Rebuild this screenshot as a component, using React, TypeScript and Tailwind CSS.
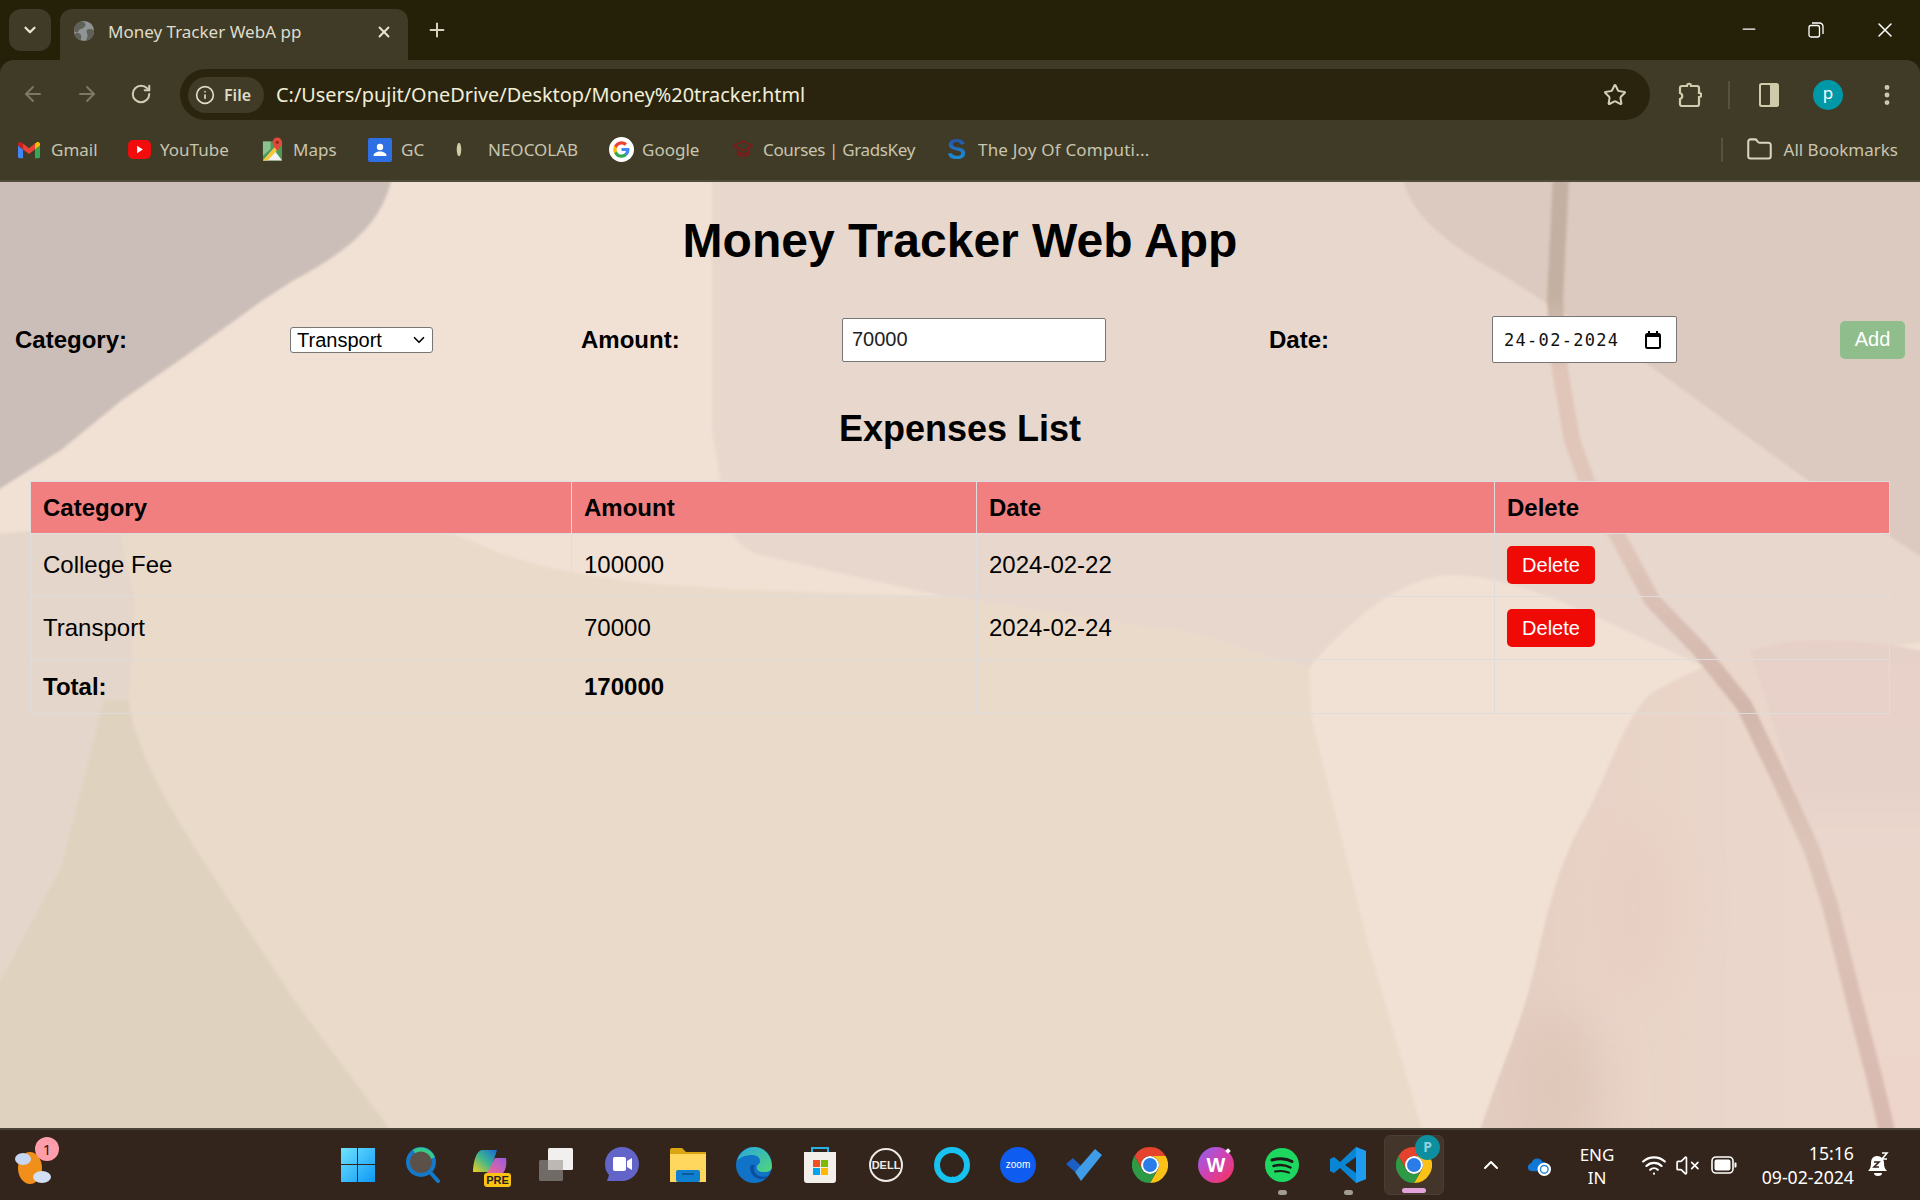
import { ArrowLeft, ArrowRight, RotateCw, Info, Star, X, Plus, ChevronDown, ChevronUp, Minus, EllipsisVertical, Folder, Wifi, VolumeX } from 'lucide-react';

const expenses = [
  { category: 'College Fee', amount: '100000', date: '2024-02-22' },
  { category: 'Transport', amount: '70000', date: '2024-02-24' },
];

function GmailIcon() {
  return (
    <svg viewBox="0 0 24 18" className="w-[22px] h-[18px]">
      <path d="M0 4v12a2 2 0 0 0 2 2h3.500V8.500z" fill="#4285f4" />
      <path d="M24 4v12a2 2 0 0 1-2 2h-3.500V8.500z" fill="#34a853" />
      <path d="M18.500 2v6.500L24 4V2.500C24 .6 21.800-.5 20.300.7z" fill="#fbbc04" />
      <path d="M5.500 8.500V2L12 7l6.500-5v6.500L12 13.400z" fill="#ea4335" />
      <path d="M0 2.500V4l5.500 4.500V2L3.700.7C2.200-.5 0 .6 0 2.500" fill="#c5221f" />
    </svg>
  );
}

function YoutubeIcon() {
  return (
    <svg viewBox="0 0 24 20" className="w-[23px] h-[19px]">
      <rect width="24" height="20" rx="5" fill="#f40b0b" />
      <path d="M9.500 6v8l6-4z" fill="#fff" />
    </svg>
  );
}

function MapsIcon() {
  return (
    <svg viewBox="0 0 22 26" className="w-[21px] h-[26px]">
      <path d="M1 4h12l8 0v20H1z" fill="#4b9a5a" />
      <path d="M1 24 12 12l9 12z" fill="#f2f2f2" />
      <path d="M1 24 14 9l3 3L6 24z" fill="#f6c73b" />
      <path d="M1 4h8v8L1 19z" fill="#8cc28f" />
      <path d="M16 0a5 5 0 0 1 5 5c0 3.500-5 9-5 9s-5-5.500-5-9a5 5 0 0 1 5-5" fill="#e3493a" />
      <circle cx="16" cy="5" r="1.800" fill="#8f2d24" />
    </svg>
  );
}

function ContactsIcon() {
  return (
    <svg viewBox="0 0 24 24" className="w-[24px] h-[24px]">
      <rect width="24" height="24" rx="2" fill="#2f6fe4" />
      <circle cx="12" cy="9" r="3.200" fill="#fff" />
      <path d="M5.500 18c0-3 3-4.500 6.500-4.500s6.500 1.500 6.500 4.500z" fill="#fff" />
    </svg>
  );
}

function NeoIcon() {
  return (
    <svg viewBox="0 0 8 20" className="w-[6px] h-[19px]">
      <ellipse cx="4" cy="10" rx="3" ry="9" fill="#cfcca6" />
    </svg>
  );
}

function GoogleIcon() {
  return (
    <svg viewBox="0 0 30 30" className="w-[25px] h-[25px]">
      <circle cx="15" cy="15" r="15" fill="#fff" />
      <path d="M24.500 15.200c0-.7-.1-1.300-.2-1.900H15v3.600h5.300a4.500 4.500 0 0 1-2 3v2.400h3.200c1.900-1.700 3-4.300 3-7.100" fill="#4285f4" />
      <path d="M15 25c2.700 0 4.900-.9 6.500-2.400l-3.200-2.500c-.9.600-2 1-3.300 1-2.600 0-4.800-1.700-5.500-4.100H6.200v2.500A10 10 0 0 0 15 25" fill="#34a853" />
      <path d="M9.500 17a6 6 0 0 1 0-3.900v-2.600H6.200a10 10 0 0 0 0 9z" fill="#fbbc05" />
      <path d="M15 9c1.500 0 2.800.5 3.800 1.500l2.800-2.800A10 10 0 0 0 6.200 10.500l3.300 2.600C10.200 10.700 12.400 9 15 9" fill="#ea4335" />
    </svg>
  );
}

function CapIcon() {
  return (
    <svg viewBox="0 0 24 20" fill="none" stroke="#7a1c1c" strokeWidth="1.800" className="w-[22px] h-[19px]">
      <path d="M12 1 22 6l-10 5L2 6z" />
      <path d="M6 9v6c3 3 9 3 12 0V9" />
      <path d="M6 13c3 2 9 2 12 0" />
    </svg>
  );
}

function JoyIcon() {
  return <span className="w-[19px] text-[29px] leading-[29px] font-black font-['Liberation_Sans',sans-serif] bg-gradient-to-b from-[#26479f] to-[#0b9fe3] bg-clip-text text-transparent">S</span>;
}

function ChromeIcon() {
  return (
    <svg viewBox="0 0 36 36" className="w-[36px] h-[36px]">
      <path d="M2.410 9A18 18 0 0 1 33.590 9L18 9A9 9 0 0 0 10.200 22.500Z" fill="#e5432e" />
      <path d="M33.590 9A18 18 0 0 1 18 36L25.800 22.500A9 9 0 0 0 18 9Z" fill="#fbc116" />
      <path d="M18 36A18 18 0 0 1 2.410 9L10.200 22.500A9 9 0 0 0 25.800 22.500Z" fill="#2f9a46" />
      <circle cx="18" cy="18" r="9" fill="#fff" />
      <circle cx="18" cy="18" r="7" fill="#2a7de9" />
    </svg>
  );
}

const bookmarks = [
  { width: 'w-[110px]', label: 'Gmail', icon: <GmailIcon />, gap: 'gap-[11px]', text: '' },
  { width: 'w-[134px]', label: 'YouTube', icon: <YoutubeIcon />, gap: 'gap-[9px]', text: '' },
  { width: 'w-[106px]', label: 'Maps', icon: <MapsIcon />, gap: 'gap-[10px]', text: '' },
  { width: 'w-[88px]', label: 'GC', icon: <ContactsIcon />, gap: 'gap-[9px]', text: '' },
  { width: 'w-[153px]', label: 'NEOCOLAB', icon: <NeoIcon />, gap: 'gap-[26px]', text: '' },
  { width: 'w-[123px]', label: 'Google', icon: <GoogleIcon />, gap: 'gap-[8px]', text: '' },
  { width: 'w-[215px]', label: 'Courses | GradsKey', icon: <CapIcon />, gap: 'gap-[9px]', text: 'tracking-[-0.35px]' },
  { width: 'w-[220px]', label: 'The Joy Of Computi...', icon: <JoyIcon />, gap: 'gap-[12px]', text: 'tracking-[0.2px]' },
];

function BrowserChrome() {
  return (
    <div className="bg-[#252109] font-['Noto_Sans',sans-serif]">
      {/* tab strip */}
      <div className="h-[60px] flex items-start pl-[9px] relative">
        <div className="mt-[9px] w-[42px] h-[42px] rounded-xl bg-[#403b26] flex items-center justify-center text-[#e8e6d4]">
          <ChevronDown size={18} strokeWidth={3} />
        </div>
        <div className="relative ml-[9px] mt-[9px] w-[348px] h-[51px] rounded-t-xl bg-[#403b26] flex items-center pl-[13px] pr-[15px]">
          <svg viewBox="0 0 24 24" className="w-[22px] h-[22px] shrink-0 mb-[8px]">
            <defs>
              <clipPath id="globe"><circle cx="12" cy="12" r="11" /></clipPath>
            </defs>
            <circle cx="12" cy="12" r="11" fill="#8f9494" />
            <g clipPath="url(#globe)" fill="#5f6058">
              <path d="M9 1c3 1 6 3 4 6s-6 2-7 5-5 1-6-1V1z" />
              <path d="M15 11c3-2 6-1 9 1v6l-6 6h-3c-1-3 1-5 1-7s-2-4-1-6zM4 14c3 0 5 2 5 4s-1 3 0 6H3l-3-7z" />
            </g>
          </svg>
          <span className="ml-[13px] text-[17px] leading-[24px] text-[#dedcca] mb-[6px] whitespace-nowrap">Money Tracker WebA pp</span>
          <X size={18} strokeWidth={2.5} className="ml-auto mb-[6px] text-[#e8e6d4]" />
        </div>
        <Plus size={22} strokeWidth={2.2} className="ml-[18px] mt-[19px] text-[#d5d3bd]" />
        <div className="ml-auto flex items-center h-[60px] pb-[1px] text-white">
          <Minus size={20} strokeWidth={1.5} className="mr-[49px] mb-[2px]" />
          <svg viewBox="0 0 16 16" fill="none" stroke="#fff" strokeWidth="1.300" className="w-[16px] h-[16px] mr-[49px]">
            <rect x="1" y="3.500" width="10.500" height="11.500" rx="2" />
            <path d="M4 1h7.500a3.500 3.500 0 0 1 3.500 3.500V12" />
          </svg>
          <X size={24} strokeWidth={1.5} className="mr-[23px]" />
        </div>
      </div>

      {/* toolbar + bookmarks */}
      <div className="rounded-t-[14px] bg-[#403b26]">
        <div className="h-[60px] flex items-end">
          <ArrowLeft size={24} strokeWidth={2} className="ml-[21px] mb-[14px] text-[#7b7865]" />
          <ArrowRight size={24} strokeWidth={2} className="ml-[30px] mb-[14px] text-[#7b7865]" />
          <RotateCw size={22} strokeWidth={2.2} className="ml-[31px] mb-[15px] text-[#cfcdb4]" />
          <div className="ml-[28px] w-[1470px] h-[51px] rounded-full bg-[#2a240e] flex items-center pl-[8px] mt-auto">
            <div className="h-[36px] w-[76px] rounded-full bg-[#403b26] flex items-center pl-[7px] gap-[9px] text-[#dedcc6]">
              <Info size={20} strokeWidth={2} />
              <span className="text-[16px] font-semibold leading-none">File</span>
            </div>
            <span className="ml-[12px] text-[19.9px] text-[#f0eed8] whitespace-nowrap">C:/Users/pujit/OneDrive/Desktop/Money%20tracker.html</span>
            <Star size={24} strokeWidth={2} className="ml-auto mr-[23px] text-[#d2d0ba]" />
          </div>
          <div className="flex items-center h-[51px]">
            <svg viewBox="0 0 24 28" fill="none" stroke="#cfcdae" strokeWidth="2.200" className="ml-[28px] w-[24px] h-[28px]">
              <path d="M4 5h5c0-3 4-3 4 0h6a2 2 0 0 1 2 2v5c3 0 3 4 0 4v7a2 2 0 0 1-2 2H4a2 2 0 0 1-2-2v-5c3-1 3-5 0-6V7a2 2 0 0 1 2-2z" />
            </svg>
            <div className="ml-[26px] w-[2px] h-[28px] bg-[#57523a]" />
            <svg viewBox="0 0 22 26" className="ml-[28px] w-[22px] h-[26px]">
              <rect x="1" y="1" width="20" height="24" rx="2.500" fill="#cfcbaa" />
              <rect x="3" y="3" width="9" height="20" rx="1" fill="#403b26" />
            </svg>
            <div className="ml-[33px] w-[30px] h-[30px] rounded-full bg-[#0097a7] text-white text-[17px] leading-[26px] text-center">p</div>
            <EllipsisVertical size={26} strokeWidth={2.5} className="ml-[31px] text-[#cfcdb4]" />
          </div>
        </div>
        <div className="h-[60px] flex items-center pl-[18px] pb-[1px] text-[#c8c5b0] text-[17px]">
          {bookmarks.map((b) => (
            <div key={b.label} className={`${b.width} ${b.gap} flex items-center shrink-0`}>
              {b.icon}
              <span className={`whitespace-nowrap ${b.text}`}>{b.label}</span>
            </div>
          ))}
          <div className="ml-auto w-[2px] h-[24px] bg-[#57523a]" />
          <Folder size={27} strokeWidth={1.8} className="ml-[23px] text-[#d8d6c2]" />
          <span className="ml-[11px] mr-[22px] whitespace-nowrap">All Bookmarks</span>
        </div>
      </div>
      <div className="h-[2px] bg-[#4f4c3c]" />
    </div>
  );
}

function Backdrop() {
  const petal = 'M1477 1140 C1500 1070 1515 1040 1529 990 C1545 930 1550 880 1585 817 C1610 770 1625 715 1652 693 C1690 670 1760 640 1817 640 C1860 640 1900 645 1930 653 V1140Z';
  return (
    <svg viewBox="0 182 1920 946" preserveAspectRatio="none" className="absolute inset-0 w-full h-full">
      <defs>
        <filter id="soft"><feGaussianBlur stdDeviation="1.500" /></filter>
        <filter id="softer" x="-100%" y="-100%" width="300%" height="300%"><feGaussianBlur stdDeviation="24" /></filter>
        <linearGradient id="petalLeft" x1="1477" y1="0" x2="1800" y2="0" gradientUnits="userSpaceOnUse">
          <stop offset="0" stopColor="#e2cbbf" />
          <stop offset="0.35" stopColor="#e8d2c6" />
          <stop offset="1" stopColor="#ebd7cc" />
        </linearGradient>
        <linearGradient id="petalRight" x1="0" y1="640" x2="0" y2="1128" gradientUnits="userSpaceOnUse">
          <stop offset="0" stopColor="#e6d0c8" />
          <stop offset="0.3" stopColor="#e7d2c9" />
          <stop offset="0.4" stopColor="#ead6cc" />
          <stop offset="1" stopColor="#eed5cb" />
        </linearGradient>
        <linearGradient id="streak" x1="0" y1="182" x2="0" y2="1128" gradientUnits="userSpaceOnUse">
          <stop offset="0" stopColor="#c4b0a3" />
          <stop offset="0.12" stopColor="#c4b0a3" />
          <stop offset="0.2" stopColor="#e0c5b8" />
          <stop offset="0.38" stopColor="#e0c6ba" />
          <stop offset="0.55" stopColor="#d2b6ac" />
          <stop offset="0.7" stopColor="#dcc4b8" />
          <stop offset="1" stopColor="#d8b9af" />
        </linearGradient>
        <clipPath id="petalClip"><path d={petal} /></clipPath>
      </defs>
      <rect x="0" y="182" width="1920" height="946" fill="#f1e1d4" />
      <g filter="url(#soft)">
        {/* pink centre */}
        <path d="M712 170 V430 L722 490 C726 530 735 547 760 555 L960 600 L1193 633 L1309 668 C1350 620 1400 578 1450 575 C1520 575 1600 620 1700 665 L1950 640 V170Z" fill="#e8d7cd" />
        {/* beige lower area */}
        <path d="M-10 535 C100 525 250 515 330 520 C400 522 440 528 470 540 C520 565 600 585 760 590 L960 598 L1193 633 L1309 668 L1312 720 L1370 950 L1425 1140 H-10Z" fill="#eadaca" />
        {/* left wash + wedge */}
        <path d="M-10 535 C40 528 90 530 120 535 L135 600 L129 700 C135 760 190 840 227 897 L294 1000 L398 1140 H-10Z" fill="#e4d6cb" />
        <path d="M104 700 L129 700 C135 760 190 840 227 897 L294 1000 L398 1140 H-10 V1000 L61 867Z" fill="#dfd3bf" />
        {/* cream block over the table */}
        <path d="M1309 668 C1350 620 1400 578 1450 575 C1520 575 1600 620 1700 665 L1600 760 L1560 860 L1529 990 L1477 1140 H1428 L1370 950 L1312 720Z" fill="#f1e1d4" />
        {/* top left mauve */}
        <path d="M-10 170 H394 C385 210 370 240 294 280 L263 300 L184 357 L122 400 L61 450 L-10 495Z" fill="#cbbdb8" />
        {/* top right */}
        <path d="M1402 170 C1405 210 1440 240 1506 277 L1542 300 L1652 367 L1817 487 L1930 563 V170Z" fill="#dcc9bf" />
        {/* right petal */}
        <path d={petal} fill="url(#petalLeft)" />
        <path d="M1744 630 L1830 905 L1885 1140 H1930 V630Z" fill="url(#petalRight)" clipPath="url(#petalClip)" />
      </g>
      <g clipPath="url(#petalClip)">
        <ellipse cx="1555" cy="1090" rx="45" ry="80" fill="#dfc8ba" filter="url(#softer)" />
        <ellipse cx="1634" cy="907" rx="40" ry="90" fill="#e8cfc3" filter="url(#softer)" />
      </g>
      {/* streak */}
      <path d="M1561 175 L1555 300 L1560 370 L1572 440 L1590 490 L1620 540 L1652 600 L1700 650 L1744 705 L1780 780 L1812 850 L1830 905 L1854 1000 L1875 1080 L1888 1135" fill="none" stroke="url(#streak)" strokeWidth="16" strokeLinejoin="round" filter="url(#soft)" />
    </svg>
  );
}

function ExpenseForm() {
  const label = 'text-[24px] font-bold leading-[28px] whitespace-nowrap';
  return (
    <div className="mt-[47px] h-[47px] flex items-center">
      <label className={`${label} w-[112px]`}>Category:</label>
      <div className="relative ml-[163px] w-[143px] h-[26px]">
        <select defaultValue="Transport" className="w-full h-full appearance-none pl-[6px] bg-white border border-[#767676] rounded-[3px] text-[20px] leading-[22px] text-black">
          <option>College Fee</option>
          <option>Transport</option>
        </select>
        <ChevronDown size={18} strokeWidth={2.2} className="absolute right-[5px] top-[4px] text-black" />
      </div>
      <label className={`${label} ml-[148px] w-[97px]`}>Amount:</label>
      <input readOnly value="70000" className="ml-[164px] w-[264px] h-[44px] bg-white border border-[#767676] rounded-[2px] pl-[9px] text-[20px] text-[#222]" />
      <label className={`${label} ml-[163px] w-[60px]`}>Date:</label>
      <div className="ml-[163px] w-[185px] h-[47px] bg-white border border-[#767676] rounded-[2px] flex items-center pl-[11px]">
        <span className="mt-[2px] font-['DejaVu_Sans_Mono',monospace] text-[17px] tracking-[1.3px] text-[#111]">24-02-2024</span>
        <svg viewBox="0 0 16 18" className="ml-auto mr-[15px] w-[16px] h-[18px]" fill="none" stroke="#000" strokeWidth="2">
          <rect x="1" y="3" width="14" height="14" rx="1.500" />
          <path d="M1 5h14M4 0v3M12 0v3" />
        </svg>
      </div>
      <button className="ml-[163px] w-[65px] h-[38px] rounded-[5px] bg-[#8fbd8b] text-white text-[20px] pb-[2px]">Add</button>
    </div>
  );
}

function ExpenseTable() {
  const cell = 'border border-[#dddddd] px-[12px] text-left';
  return (
    <table className="mt-[31px] mx-[30px] w-[1860px] border-collapse table-fixed text-[24px]">
      <colgroup>
        <col className="w-[541px]" />
        <col className="w-[405px]" />
        <col className="w-[518px]" />
        <col />
      </colgroup>
      <thead>
        <tr className="h-[52px] bg-[#f27f7f]">
          <th className={cell}>Category</th>
          <th className={cell}>Amount</th>
          <th className={cell}>Date</th>
          <th className={cell}>Delete</th>
        </tr>
      </thead>
      <tbody>
        {expenses.map((row) => (
          <tr key={row.category} className="h-[63px]">
            <td className={cell}>{row.category}</td>
            <td className={cell}>{row.amount}</td>
            <td className={cell}>{row.date}</td>
            <td className={cell}>
              <button className="block w-[88px] h-[38px] rounded-[5px] bg-[#f00a05] text-white text-[20px]">Delete</button>
            </td>
          </tr>
        ))}
        <tr className="h-[54px]">
          <td className={`${cell} font-bold`}>Total:</td>
          <td className={`${cell} font-bold`}>170000</td>
          <td className={cell}></td>
          <td className={cell}></td>
        </tr>
      </tbody>
    </table>
  );
}

function Slot({ children, dot, active }: { children: React.ReactNode; dot?: boolean; active?: boolean }) {
  return (
    <div className={`relative w-[66px] h-[72px] flex items-center justify-center ${active ? 'z-0' : ''}`}>
      {active && <div className="absolute left-[3px] right-[3px] top-[6px] bottom-[6px] rounded-md bg-[#433529] border border-[#4a3d31]" />}
      <div className="relative">{children}</div>
      {dot && <div className="absolute bottom-[6px] left-[29px] w-[9px] h-[5px] rounded-full bg-[#a29b94]" />}
      {active && <div className="absolute bottom-[8px] left-[21px] w-[24px] h-[5px] rounded-full bg-[#e3a3dc]" />}
    </div>
  );
}

function TaskIcons() {
  return (
    <div className="flex items-center ml-[274px]">
      <Slot>
        <svg viewBox="0 0 36 36" className="w-[36px] h-[36px]">
          <defs>
            <linearGradient id="win" x1="0" y1="0" x2="1" y2="1">
              <stop offset="0" stopColor="#6fe3ff" />
              <stop offset="1" stopColor="#0d98f5" />
            </linearGradient>
          </defs>
          <path d="M1 1h16v16H1zM18 1h17v16H18zM1 18h16v17H1zM18 18h17v17H18z" fill="url(#win)" />
        </svg>
      </Slot>
      <Slot>
        <svg viewBox="0 0 36 36" fill="none" className="w-[36px] h-[36px]">
          <circle cx="15" cy="15" r="13" fill="#5c5148" stroke="#1479c9" strokeWidth="4" />
          <path d="M8 4.500A13 13 0 0 1 27 11" stroke="#37c98a" strokeWidth="4" />
          <path d="M24 25l8 9" stroke="#1479c9" strokeWidth="4" strokeLinecap="round" />
        </svg>
      </Slot>
      <Slot>
        <div className="relative w-[36px] h-[36px]">
          <svg viewBox="0 0 36 36" className="w-[36px] h-[36px]">
            <defs>
              <linearGradient id="cop1" x1="0" y1="1" x2="1" y2="0">
                <stop offset="0" stopColor="#f7cf17" />
                <stop offset="0.5" stopColor="#3fb78d" />
                <stop offset="1" stopColor="#1769d8" />
              </linearGradient>
              <linearGradient id="cop2" x1="0" y1="1" x2="1" y2="0">
                <stop offset="0" stopColor="#f66d8c" />
                <stop offset="1" stopColor="#9c58e0" />
              </linearGradient>
            </defs>
            <path d="M10 3h15l-7 22H1C1 14 5 3 10 3z" fill="url(#cop1)" />
            <path d="M23 11h11c1 6 0 15-6 17H14z" fill="url(#cop2)" />
          </svg>
          <span className="absolute right-[-3px] bottom-[-4px] w-[27px] h-[14px] rounded-[3px] bg-[#fdc314] text-[#222] text-[11px] leading-[14px] font-bold text-center font-['Liberation_Sans',sans-serif]">PRE</span>
        </div>
      </Slot>
      <Slot>
        <svg viewBox="0 0 36 36" className="w-[36px] h-[36px]">
          <rect x="10" y="1" width="25" height="22" rx="1.500" fill="#f2f0ee" />
          <rect x="1" y="13" width="24" height="21" rx="1.500" fill="#7d7875" fillOpacity="0.85" />
          <rect x="10" y="13" width="15" height="10" fill="#bdb8b4" />
        </svg>
      </Slot>
      <Slot>
        <svg viewBox="0 0 34 36" className="w-[34px] h-[36px]">
          <path d="M17 0c9 0 17 7 17 17 0 10-8 17-17 17H2l2-6C1 25 0 21 0 17 0 7 8 0 17 0z" fill="#6264c7" />
          <rect x="8" y="10" width="13" height="14" rx="2" fill="#fff" />
          <path d="M22 14l5-3v12l-5-3z" fill="#fff" />
        </svg>
      </Slot>
      <Slot>
        <svg viewBox="0 0 36 34" className="w-[36px] h-[34px]">
          <path d="M0 2a2 2 0 0 1 2-2h10l4 4h20v30H0z" fill="#dca512" />
          <rect y="6" width="36" height="28" fill="#ffd75e" />
          <rect x="6" y="22" width="24" height="12" rx="2" fill="#0f7fd0" />
          <rect x="12" y="25" width="12" height="2" fill="#0b5a98" />
        </svg>
      </Slot>
      <Slot>
        <svg viewBox="0 0 36 36" className="w-[36px] h-[36px]">
          <defs>
            <linearGradient id="edge" x1="0" y1="0" x2="1" y2="1">
              <stop offset="0" stopColor="#2aa6df" />
              <stop offset="1" stopColor="#4fd67a" />
            </linearGradient>
          </defs>
          <circle cx="18" cy="18" r="18" fill="#1173c8" />
          <path d="M1 14C4 4 12 0 18 0c10 0 18 8 18 20 0 3-3 5-8 5-6 0-8-3-7-6 1-2 3-2 3-5 0-4-4-6-8-6C10 8 4 10 1 14z" fill="url(#edge)" />
          <path d="M14 20c0 8 6 13 14 12 2-.3 3-1 5-3-4 1-7 1-10 0-5-2-6-7-4-11-3 0-5 0-5 2z" fill="#0b4f9f" />
        </svg>
      </Slot>
      <Slot>
        <svg viewBox="0 0 34 38" className="w-[34px] h-[38px]">
          <path d="M9 6V2h16v4" fill="none" stroke="#2ab0e6" strokeWidth="2" />
          <path d="M1 6h32v28a3 3 0 0 1-3 3H4a3 3 0 0 1-3-3z" fill="#f3f0ec" />
          <rect x="10" y="14" width="7" height="7" fill="#f25022" />
          <rect x="18" y="14" width="7" height="7" fill="#7fba00" />
          <rect x="10" y="22" width="7" height="7" fill="#00a4ef" />
          <rect x="18" y="22" width="7" height="7" fill="#ffb900" />
        </svg>
      </Slot>
      <Slot>
        <div className="w-[34px] h-[34px] rounded-full border-2 border-[#efeae4] text-[#efeae4] text-[11px] font-bold leading-[30px] text-center font-['Liberation_Sans',sans-serif]">DELL</div>
      </Slot>
      <Slot>
        <svg viewBox="0 0 36 36" fill="none" className="w-[36px] h-[36px]">
          <circle cx="18" cy="18" r="15" stroke="#17c1f0" strokeWidth="6" />
          <path d="M14 34l5-5v7z" fill="#17c1f0" />
        </svg>
      </Slot>
      <Slot>
        <div className="w-[36px] h-[36px] rounded-full bg-[#0e5cf0] text-white text-[10px] leading-[36px] text-center font-['Liberation_Sans',sans-serif]">zoom</div>
      </Slot>
      <Slot>
        <svg viewBox="0 0 36 32" className="w-[36px] h-[32px]">
          <path d="M0 15l7-6 8 8-6 6z" fill="#1c5fc4" />
          <path d="M15 32 9 23 29 0l7 6z" fill="#3f9ce8" />
        </svg>
      </Slot>
      <Slot><ChromeIcon /></Slot>
      <Slot>
        <div className="relative w-[36px] h-[36px] rounded-full bg-gradient-to-br from-[#8a5af0] via-[#d23fb0] to-[#f9264e] flex items-center justify-center text-white text-[20px] font-black font-['Liberation_Sans',sans-serif]">
          W
          <span className="absolute right-[4px] top-[2px] w-[4px] h-[4px] rotate-45 bg-white" />
        </div>
      </Slot>
      <Slot dot>
        <svg viewBox="0 0 34 34" fill="none" stroke="#1c1a16" strokeWidth="3" strokeLinecap="round" className="w-[34px] h-[34px]">
          <circle cx="17" cy="17" r="17" fill="#1ed760" stroke="none" />
          <path d="M7 12c7-2 14-2 20 1.500" />
          <path d="M8.500 18c6-1.500 12-1 17 1.500" strokeWidth="2.500" />
          <path d="M10 23.500c5-1 10-.8 14 1.200" strokeWidth="2" />
        </svg>
      </Slot>
      <Slot dot>
        <svg viewBox="0 0 36 36" className="w-[36px] h-[36px]">
          <path d="M26 0 36 4v28l-10 4L10 21l-6 5-4-2V12l4-2 6 5z" fill="#0a85d4" />
          <path d="M26 0 36 4v28l-10 4z" fill="#1f9cf0" />
          <path d="M26 10 15 18l11 8z" fill="#33261c" />
        </svg>
      </Slot>
      <Slot active>
        <div className="relative">
          <ChromeIcon />
          <div className="absolute top-[-12px] right-[-8px] w-[25px] h-[25px] rounded-full bg-[#0d8f9f] text-[#8ed3db] text-[14px] leading-[24px] text-center font-bold">P</div>
        </div>
      </Slot>
    </div>
  );
}

function Tray() {
  return (
    <div className="ml-auto flex items-center text-white">
      <ChevronUp size={24} strokeWidth={2} />
      <svg viewBox="0 0 26 24" className="ml-[24px] w-[25px] h-[23px]">
        <path d="M2 17a5 5 0 0 1 3-8c1-5 9-6 11-1 4 0 6 3 5 7l-5 3H5z" fill="#0f78d4" />
        <circle cx="18" cy="16" r="7" fill="#fff" />
        <circle cx="18" cy="16" r="4" fill="none" stroke="#2b88d8" strokeWidth="1.500" />
      </svg>
      <div className="ml-[22px] w-[46px] text-center text-[17px] leading-[23px] mt-[2px] font-['Noto_Sans',sans-serif]">
        <div>ENG</div>
        <div>IN</div>
      </div>
      <Wifi size={26} strokeWidth={2} className="ml-[21px]" />
      <VolumeX size={25} strokeWidth={1.6} className="ml-[8px]" />
      <svg viewBox="0 0 26 18" fill="none" className="ml-[11px] w-[26px] h-[18px]">
        <rect x="1" y="1" width="21" height="16" rx="4" stroke="#fff" strokeWidth="1.600" />
        <rect x="3.500" y="3.500" width="16" height="11" rx="2" fill="#fff" />
        <path d="M23.500 6.500h1a1 1 0 0 1 1 1v3a1 1 0 0 1-1 1h-1z" fill="#fff" />
      </svg>
      <div className="ml-[17px] w-[100px] text-right text-[17.7px] leading-[24px] font-['Noto_Sans',sans-serif]">
        <div>15:16</div>
        <div>09-02-2024</div>
      </div>
      <svg viewBox="0 0 22 26" className="ml-[13px] mr-[31px] w-[22px] h-[26px]">
        <path d="M10 4c-4 0-6 3-6 7 0 4-1 6-3 8h19c-2-2-3-4-3-8 0-4-3-7-7-7zM7 21a4 3 0 0 0 8 0z" fill="#fff" />
        <path d="M7 10h5l-5 5h5" fill="none" stroke="#33251b" strokeWidth="1.600" />
        <path d="M15 1h5l-5 6h5" fill="none" stroke="#fff" strokeWidth="1.600" />
      </svg>
    </div>
  );
}

function Taskbar() {
  return (
    <div className="h-[72px] shrink-0 border-t-2 border-[#4a4138] bg-[#33251b] flex items-center font-['Noto_Sans',sans-serif]">
      <div className="relative ml-[15px] w-[36px] h-[40px]">
        <svg viewBox="0 0 36 40" className="w-[36px] h-[40px]">
          <ellipse cx="15" cy="23" rx="12" ry="16" fill="#f08f1a" />
          <ellipse cx="8" cy="14" rx="8" ry="6" fill="#c7d7f2" />
          <ellipse cx="27" cy="32" rx="9" ry="6" fill="#d2dff5" />
        </svg>
        <div className="absolute top-[-8px] right-[-8px] w-[24px] h-[24px] rounded-full bg-[#ff9eaa] text-[#222] text-[15px] leading-[24px] text-center">1</div>
      </div>
      <TaskIcons />
      <Tray />
    </div>
  );
}

export default function App() {
  return (
    <div className="w-[1920px] h-[1200px] flex flex-col overflow-hidden font-['Liberation_Sans',Arial,sans-serif] text-black">
      <BrowserChrome />
      <main className="relative flex-1">
        <Backdrop />
        <div className="relative">
          <div className="px-[15px]">
            <h1 className="pt-[31px] text-center text-[48px] leading-[56px] font-bold">Money Tracker Web App</h1>
            <ExpenseForm />
            <h2 className="mt-[45px] text-center text-[36px] leading-[42px] font-bold">Expenses List</h2>
          </div>
          <ExpenseTable />
        </div>
      </main>
      <Taskbar />
    </div>
  );
}
